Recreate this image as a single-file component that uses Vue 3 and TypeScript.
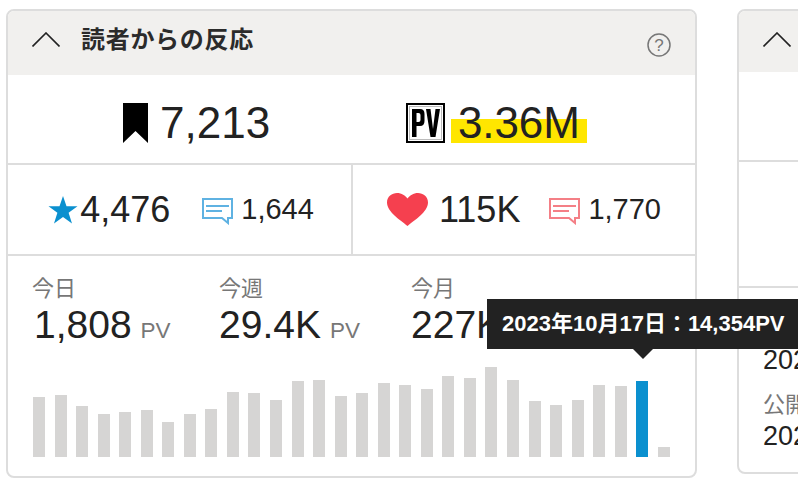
<template>
  <div class="page">
    <section class="card">
      <header class="card-head">
        <svg class="chevron" width="28" height="15" viewBox="0 0 28 15"><path d="M0.500 14.500 L14 1 L27.500 14.500" fill="none" stroke="#222" stroke-width="1.6" /></svg>
        <h2 class="title">読者からの反応</h2>
        <svg class="help" width="24" height="24" viewBox="0 0 24 24">
          <circle cx="12" cy="12" r="11" fill="none" stroke="#777" stroke-width="1.5" />
          <text x="12" y="18" text-anchor="middle" class="help-mark">?</text>
        </svg>
      </header>

      <div class="row-top">
        <div class="top-cell mark-cell">
          <svg width="25" height="40" viewBox="0 0 25 40"><path d="M0 0H25V40L12.500 28L0 40Z" fill="#000" /></svg>
          <span class="big">7,213</span>
        </div>
        <div class="top-cell pv-cell">
          <svg width="39" height="40" viewBox="0 0 39 40">
            <rect x="1" y="1" width="37" height="38" fill="#fff" stroke="#000" stroke-width="2" />
            <rect x="3.500" y="3.500" width="32" height="33" fill="none" stroke="#bbb" stroke-width="1" />
            <path d="M6 6V34H10.500V23H14Q18.500 23 18.500 18V11Q18.500 6 14 6ZM10.500 10H12.500Q14.500 10 14.500 12V17Q14.500 19 12.500 19H10.500Z" fill="#000" fill-rule="evenodd" />
            <path d="M20 6H24.500L27 26L29.500 6H34L29.500 34H24.500Z" fill="#000" />
          </svg>
          <span class="big marked">3.36M</span>
        </div>
      </div>

      <div class="row-mid">
        <div class="mid-cell star-cell">
          <svg width="30" height="28" viewBox="0 0 30 28"><path d="M15 0L18.500 10.300H29.500L20.600 16.800L24 27.500L15 21L6 27.500L9.400 16.800L0.500 10.300H11.500Z" fill="#0b90cf" /></svg>
          <span class="mid-num">4,476</span>
          <svg class="bubble" width="31" height="27" viewBox="0 0 31 27">
            <path d="M1 1H30V20H26V25L20 20H1Z" fill="none" stroke="#5fb2e2" stroke-width="2" />
            <path d="M4 8H27M4 13H20" stroke="#5fb2e2" stroke-width="2" />
          </svg>
          <span class="small-num">1,644</span>
        </div>
        <div class="mid-cell">
          <svg width="41" height="33" viewBox="0 0 41 33"><path d="M20.500 33C14 27.500 0 19 0 9.500C0 3.500 5 0 10 0C14.500 0 18.500 2.500 20.500 5.500C22.500 2.500 26.500 0 31 0C36 0 41 3.500 41 9.500C41 19 27 27.500 20.500 33Z" fill="#f5404f" /></svg>
          <span class="mid-num heart-num">115K</span>
          <svg class="bubble heart-bubble" width="31" height="27" viewBox="0 0 31 27">
            <path d="M1 1H30V20H26V25L20 20H1Z" fill="none" stroke="#f47f86" stroke-width="2" />
            <path d="M4 8H27M4 13H20" stroke="#f47f86" stroke-width="2" />
          </svg>
          <span class="small-num">1,770</span>
        </div>
      </div>

      <div class="stats">
        <div class="periods">
          <div v-for="p in periods" :key="p.label" class="period" :class="p.cls">
            <div class="period-label">{{ p.label }}</div>
            <div class="period-value">{{ p.value }}<span class="unit">PV</span></div>
          </div>
        </div>
        <div class="chart">
          <div
            v-for="(h, i) in bars"
            :key="i"
            class="bar"
            :class="{ active: i === 28 }"
            :style="{ height: h + 'px' }"
          ></div>
          <div class="tooltip">2023年10月17日：14,354PV</div>
        </div>
      </div>
    </section>

    <section class="card card-side">
      <header class="card-head side-head">
        <svg class="chevron" width="28" height="15" viewBox="0 0 28 15"><path d="M0.500 14.500 L14 1 L27.500 14.500" fill="none" stroke="#222" stroke-width="1.6" /></svg>
      </header>
      <div class="side-block"></div>
      <div class="side-block tall"></div>
      <div class="side-info">
        <div class="side-value">2023</div>
        <div class="side-label">公開日</div>
        <div class="side-value">2023</div>
      </div>
    </section>
  </div>
</template>

<script setup lang="ts">
const periods = [
  { label: '今日', value: '1,808', cls: 'today' },
  { label: '今週', value: '29.4K', cls: 'week' },
  { label: '今月', value: '227K', cls: 'month' }
]

// heights read off the reference, one bar per day
const bars: number[] = [
  60, 62, 51, 43, 45, 47, 35, 43, 48, 65,
  64, 57, 76, 77, 61, 64, 74, 72, 68, 81,
  79, 90, 77, 56, 52, 57, 72, 71, 76, 10
]
</script>

<style>
html, body {
  margin: 0;
  overflow: hidden;
  background: #fff;
}
</style>

<style scoped>
.page {
  display: flex;
  gap: 40px;
  width: 798px;
  height: 478px;
  padding: 9px 0 0 6px;
  box-sizing: border-box;
  overflow: hidden;
  font-family: "Liberation Sans", "Noto Sans CJK JP", sans-serif;
  color: #222;
}

.card {
  flex: 0 0 691px;
  height: 469px;
  box-sizing: border-box;
  border: 2px solid #ddd;
  border-radius: 8px;
  background: #fff;
}

.card-side {
  height: 465px;
}

.card-head {
  display: flex;
  align-items: flex-start;
  height: 64px;
  box-sizing: border-box;
  padding: 21px 24px 0 24px;
  border-radius: 6px 6px 0 0;
  background: #f1f0ee;
}

.chevron {
  flex: none;
}

.title {
  margin: -10px 0 0 21px;
  font-size: 24px;
  line-height: 36px;
  font-weight: 700;
  letter-spacing: 0.7px;
  color: #2b2b2b;
  white-space: nowrap;
}

.help {
  margin: 1px 0 0 auto;
}

.help-mark {
  font-size: 17px;
  fill: #777;
  font-family: "Liberation Sans", sans-serif;
}

.row-top {
  display: grid;
  grid-template-columns: 343px 1fr;
  height: 88px;
  border-bottom: 2px solid #ddd;
}

.top-cell {
  display: flex;
  align-items: center;
  gap: 12px;
  padding-top: 8px;
}

.mark-cell {
  padding-left: 115px;
}

.pv-cell {
  padding-left: 55px;
  gap: 13px;
}

.big {
  font-size: 44px;
  line-height: 50px;
}

.marked {
  background: linear-gradient(transparent 42%, #ffe600 42%, #ffe600 90%, transparent 90%);
  padding: 0 7px;
  margin-left: -7px;
  letter-spacing: -0.1px;
}

.row-mid {
  display: grid;
  grid-template-columns: 343px 1fr;
  height: 89px;
  border-bottom: 2px solid #ddd;
}

.mid-cell {
  display: flex;
  align-items: center;
  justify-content: center;
}

.mid-cell + .mid-cell {
  border-left: 2px solid #ddd;
}

.star-cell {
  padding-left: 3px;
}

.mid-num {
  margin-left: 2px;
  font-size: 36px;
}

.heart-num {
  margin-left: 11px;
}

.bubble {
  margin-left: 32px;
  margin-top: 3px;
}

.heart-bubble {
  margin-left: 29px;
}

.small-num {
  margin-left: 8px;
  font-size: 29px;
}

.stats {
  position: relative;
  padding: 0 24px;
}

.periods {
  display: flex;
  padding-top: 18px;
}

.period {
  white-space: nowrap;
}

.today {
  width: 187px;
}

.week {
  width: 192px;
}

.period-label {
  font-size: 22px;
  line-height: 30px;
  color: #777;
}

.period-value {
  font-size: 39px;
  line-height: 44px;
  margin: -1px 0 0 2px;
}

.week .period-value,
.month .period-value {
  margin-left: 0;
}

.unit {
  margin-left: 9px;
  font-size: 22.500px;
  color: #777;
}

.chart {
  position: relative;
  display: flex;
  align-items: flex-end;
  justify-content: space-between;
  width: 637px;
  height: 90px;
  margin: 14px 0 0 1px;
}

.bar {
  flex: none;
  width: 12px;
  background: #d6d5d4;
}

.bar.active {
  background: #0b90cf;
}

.tooltip {
  position: absolute;
  left: 454px;
  top: -68px;
  z-index: 2;
  padding: 0 14px 0 15px;
  height: 50px;
  line-height: 50px;
  background: #222;
  color: #fff;
  font-size: 22px;
  font-weight: 700;
  white-space: nowrap;
}

.tooltip::after {
  content: "";
  position: absolute;
  top: 100%;
  left: 146px;
  border: 10px solid transparent;
  border-top-color: #222;
  border-bottom-width: 0;
}

.side-head {
  height: 61px;
}

.side-block {
  height: 88px;
  border-bottom: 2px solid #ddd;
}

.side-block.tall {
  height: 124px;
}

.side-info {
  padding: 56px 0 0 24px;
}

.side-value {
  font-size: 27px;
  line-height: 32px;
}

.side-label {
  margin-top: 14px;
  font-size: 22px;
  line-height: 30px;
  color: #777;
}
</style>
